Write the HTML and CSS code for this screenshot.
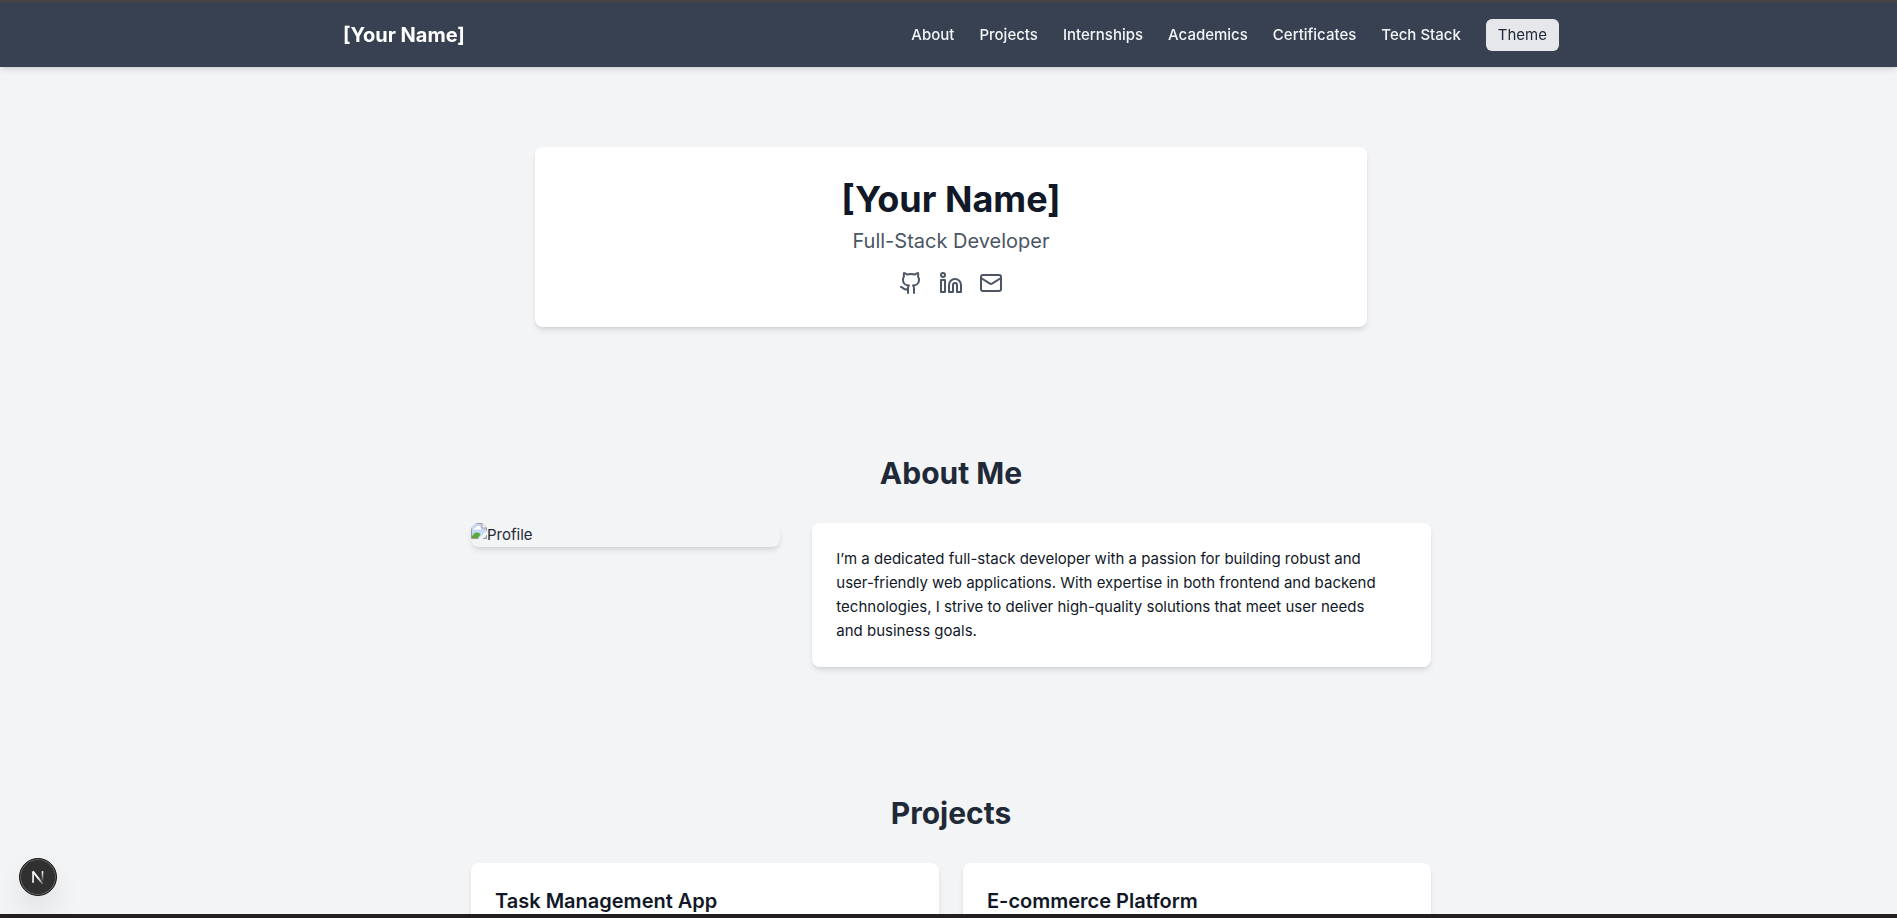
FILE: index.html
```html
<!DOCTYPE html>
<html lang="en">
<head>
<meta charset="utf-8">
<meta name="viewport" content="width=device-width, initial-scale=1">
<title>Portfolio</title>
<link rel="stylesheet" href="styles.css">
</head>
<body>
<div class="page">
  <header class="navbar">
    <div class="navbar-inner">
      <a class="brand" href="#top">[Your Name]</a>
      <nav class="nav-links">
        <a href="#about">About</a>
        <a href="#projects">Projects</a>
        <a href="#internships">Internships</a>
        <a href="#academics">Academics</a>
        <a href="#certificates">Certificates</a>
        <a href="#tech">Tech Stack</a>
        <button class="theme-button" type="button">Theme</button>
      </nav>
    </div>
  </header>
  <main class="main" id="top">
    <section class="section">
      <div class="card hero">
        <h1>[Your Name]</h1>
        <p class="role">Full-Stack Developer</p>
        <div class="social">
          <a href="#github" aria-label="GitHub"><svg class="icon" viewBox="0 0 24 24"><path d="M15 22v-4a4.8 4.8 0 0 0-1-3.5c3 0 6-2 6-5.5.08-1.25-.27-2.48-1-3.5.28-1.15.28-2.35 0-3.5 0 0-1 0-3 1.5-2.64-.5-5.36-.5-8 0C6 2 5 2 5 2c-.3 1.15-.3 2.35 0 3.5A5.403 5.403 0 0 0 4 9c0 3.5 3 5.5 6 5.5-.39.49-.68 1.05-.85 1.65-.17.6-.22 1.23-.15 1.85v4"/><path d="M9 18c-4.51 2-5-2-7-2"/></svg></a>
          <a href="#linkedin" aria-label="LinkedIn"><svg class="icon" viewBox="0 0 24 24"><path d="M16 8a6 6 0 0 1 6 6v7h-4v-7a2 2 0 0 0-2-2 2 2 0 0 0-2 2v7h-4v-7a6 6 0 0 1 6-6z"/><rect width="4" height="12" x="2" y="9"/><circle cx="4" cy="4" r="2"/></svg></a>
          <a href="#mail" aria-label="Email"><svg class="icon" viewBox="0 0 24 24"><rect width="20" height="16" x="2" y="4" rx="2"/><path d="m22 7-8.970 5.700a1.940 1.940 0 0 1-2.060 0L2 7"/></svg></a>
        </div>
      </div>
    </section>
    <section class="section" id="about">
      <h2>About Me</h2>
      <div class="about-grid">
        <div class="profile">
          <svg class="broken" viewBox="0 0 16 16" aria-hidden="true"><path d="M0.500 0.500h10.500l4.500 4.500v10.500h-15z" fill="#c6d9f7" stroke="#9a9a9a"/><path d="M3 6.500a2 2 0 0 1 2-2 2.500 2.500 0 0 1 4.500 0 1.500 1.500 0 0 1 0 2z" fill="#fff"/><path d="M1 15v-1.500c2-4.500 6-5 8.500-2L7 15z" fill="#5bab3c"/><path d="M7 16l9-8.500v4L11.500 16z" fill="#f3f4f6"/><path d="M11 0.500v4.500h4.500" fill="#fff" stroke="#9a9a9a"/></svg>
          <span>Profile</span>
        </div>
        <div class="card">
          <p class="bio">I’m a dedicated full-stack developer with a passion for building robust and user-friendly web applications. With expertise in both frontend and backend technologies, I strive to deliver high-quality solutions that meet user needs and business goals.</p>
        </div>
      </div>
    </section>
    <section class="section" id="projects">
      <h2>Projects</h2>
      <div class="project-grid">
        <article class="card"><h3>Task Management App</h3></article>
        <article class="card"><h3>E-commerce Platform</h3></article>
      </div>
    </section>
  </main>
</div>
<button class="dev-badge" type="button" aria-label="Open developer tools">
  <svg viewBox="0 0 40 40">
    <defs>
      <linearGradient id="fade-a" x1="0" y1="14" x2="0" y2="25" gradientUnits="userSpaceOnUse"><stop stop-color="#fff"/><stop offset="1" stop-color="#fff" stop-opacity="0"/></linearGradient>
      <linearGradient id="fade-b" x1="21" y1="21" x2="27" y2="29" gradientUnits="userSpaceOnUse"><stop stop-color="#fff"/><stop offset="1" stop-color="#fff" stop-opacity="0"/></linearGradient>
    </defs>
    <path d="M14.500 26.500V14" fill="none" stroke="#fff" stroke-width="1.800"/>
    <path d="M14.300 13.800l11 14" fill="none" stroke="url(#fade-b)" stroke-width="2"/>
    <path d="M25 13.500v12" fill="none" stroke="url(#fade-a)" stroke-width="1.800"/>
  </svg>
</button>
</body>
</html>
```
FILE: styles.css
```css
* {
  box-sizing: border-box;
}

body {
  margin: 0;
  height: 100vh;
  display: flex;
  flex-direction: column;
  border-top: 3px solid #444444;
  border-bottom: 4px solid #231f20;
  background: #f3f4f6;
  color: #111827;
  font-family: Inter, "Liberation Sans", sans-serif;
  font-size: 15px;
  line-height: 24px;
}

h1, h2, h3, p {
  margin: 0;
}

a {
  color: inherit;
  text-decoration: none;
}

.page {
  flex: 1;
  min-height: 0;
  overflow-y: auto;
  scrollbar-width: none;
}

.navbar {
  position: sticky;
  top: 0;
  z-index: 1;
  padding-left: 5px;
  background: #374151;
  color: #f3f4f6;
  box-shadow: 0 4px 6px -1px rgba(0, 0, 0, 0.1), 0 2px 4px -2px rgba(0, 0, 0, 0.1);
}

.navbar-inner {
  display: flex;
  align-items: center;
  justify-content: space-between;
  max-width: 1216px;
  min-height: 64px;
  margin: 0 auto;
}

.brand {
  font-size: 20px;
  font-weight: 700;
  line-height: 28px;
  color: #ffffff;
}

.nav-links {
  display: flex;
  align-items: center;
  gap: 25px;
  font-weight: 500;
}

.theme-button {
  padding: 4px 12px;
  border: 0;
  border-radius: 6px;
  background: #e5e7eb;
  color: #1f2937;
  font: inherit;
  font-weight: 400;
}

.main {
  max-width: 965px;
  margin: 0 auto;
  padding: 16px 0 0 5px;
}

.section {
  padding: 64px 0;
}

.card {
  padding: 24px;
  border-radius: 8px;
  background: #ffffff;
  box-shadow: 0 4px 6px -1px rgba(0, 0, 0, 0.1), 0 2px 4px -2px rgba(0, 0, 0, 0.1);
}

.hero {
  max-width: 832px;
  margin: 0 auto;
  padding: 32px;
  text-align: center;
}

h1 {
  font-size: 36px;
  font-weight: 700;
  line-height: 40px;
}

.role {
  margin-top: 8px;
  color: #4b5563;
  font-size: 20px;
  line-height: 28px;
}

.social {
  display: flex;
  justify-content: center;
  gap: 16px;
  margin-top: 16px;
  color: #4b5563;
}

.icon {
  display: block;
  width: 24px;
  height: 24px;
  fill: none;
  stroke: currentColor;
  stroke-width: 2;
  stroke-linecap: round;
  stroke-linejoin: round;
}

h2 {
  margin-bottom: 32px;
  color: #1f2937;
  font-size: 30px;
  font-weight: 700;
  line-height: 36px;
  text-align: center;
}

.about-grid {
  display: grid;
  grid-template-columns: 1fr 2fr;
  align-items: start;
  gap: 32px;
}

.profile {
  display: flex;
  overflow: hidden;
  border-radius: 8px;
  background: #f3f4f6;
  color: #1f2937;
  box-shadow: 0 4px 6px -1px rgba(0, 0, 0, 0.1), 0 2px 4px -2px rgba(0, 0, 0, 0.1);
}

.broken {
  width: 16px;
  height: 16px;
}

.bio {
  padding-right: 24px;
}

.project-grid {
  display: grid;
  grid-template-columns: 1fr 1fr;
  gap: 24px;
}

h3 {
  font-size: 20px;
  font-weight: 600;
  line-height: 28px;
}

.dev-badge {
  position: fixed;
  bottom: 22px;
  left: 19px;
  z-index: 2;
  width: 38px;
  height: 38px;
  padding: 0;
  border: 1px solid #171717;
  border-radius: 50%;
  background: #303030;
  box-shadow: inset 0 0 0 1px #646464, 0 16px 32px -8px rgba(0, 0, 0, 0.24);
}

.dev-badge svg {
  display: block;
  width: 100%;
}
```
